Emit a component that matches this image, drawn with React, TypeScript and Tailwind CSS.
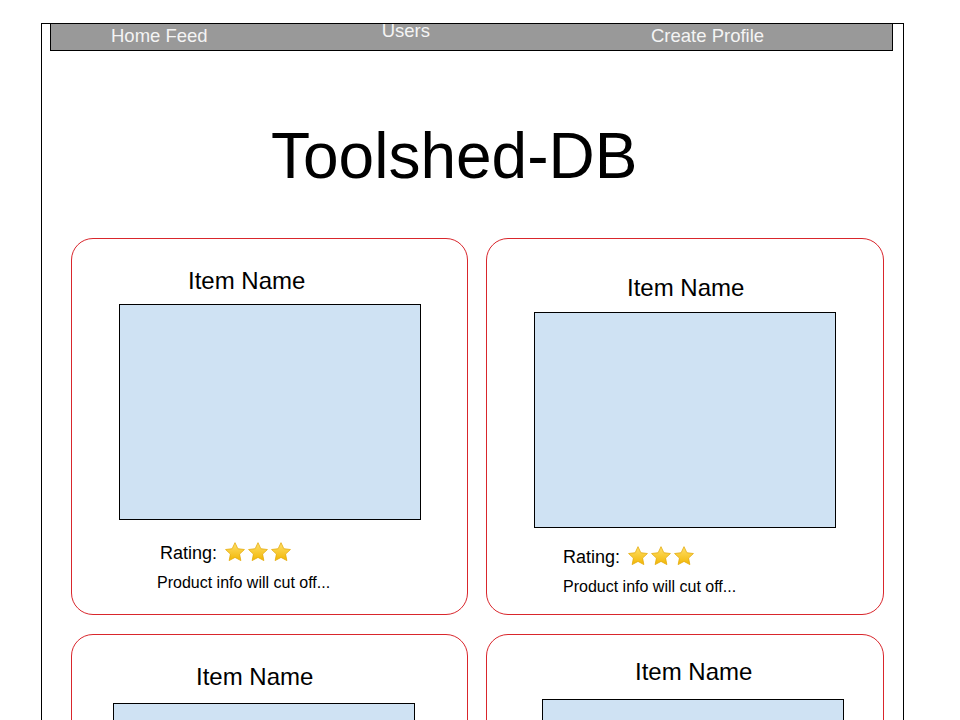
const cards = [
  { pad: 'pt-[30px]', name: 'pl-[116px]', img: 'mt-[11px] ml-[47px]', rating: 'mt-[23px] pl-[88px]', info: 'mt-[12px] pl-[85px]' },
  { pad: 'pt-[37px]', name: 'pl-[140px]', img: 'mt-[12px] ml-[47px]', rating: 'mt-[19px] pl-[76px]', info: 'mt-[12px] pl-[76px]' },
  { pad: 'pt-[30px]', name: 'pl-[124px]', img: 'mt-[14px] ml-[41px]', rating: 'mt-[19px] pl-[88px]', info: 'mt-[12px] pl-[85px]' },
  { pad: 'pt-[25px]', name: 'pl-[148px]', img: 'mt-[15px] ml-[55px]', rating: 'mt-[19px] pl-[76px]', info: 'mt-[12px] pl-[76px]' },
]

function Star() {
  return (
    <svg viewBox="0 0 24 24" className="w-[22px] h-[22px]">
      <defs>
        <linearGradient id="starFill" x1="0" y1="0" x2="0" y2="1">
          <stop offset="0%" stopColor="#ffe06a" />
          <stop offset="100%" stopColor="#f2b705" />
        </linearGradient>
      </defs>
      <path
        d="M12 1.8l3.1 6.6 7.2.9-5.3 5 1.4 7.1L12 17.9l-6.4 3.5 1.4-7.1-5.3-5 7.2-.9z"
        fill="url(#starFill)"
        stroke="#e2a600"
        strokeWidth="0.8"
        strokeLinejoin="round"
      />
    </svg>
  )
}

function ItemCard({ c }: { c: (typeof cards)[number] }) {
  return (
    <div className={`h-[377px] rounded-[22px] border border-[#d9262c] ${c.pad}`}>
      <div className={`text-[24px] leading-none text-black ${c.name}`}>Item Name</div>
      <div className={`w-[302px] h-[216px] border border-black bg-[#cfe2f3] ${c.img}`} />
      <div className={`flex items-center ${c.rating}`}>
        <span className="text-[18px] leading-none text-black">Rating:</span>
        <span className="ml-[7px] flex gap-px -mt-[2px]">
          <Star />
          <Star />
          <Star />
        </span>
      </div>
      <div className={`text-[16px] leading-none text-black ${c.info}`}>Product info will cut off...</div>
    </div>
  )
}

export default function App() {
  return (
    <div className="min-h-[720px] bg-white pt-[23px] font-['Liberation_Sans',Arial,sans-serif]">
      <div className="ml-[41px] w-[863px] border-x border-t border-black pb-10">
        <nav className="-mt-px ml-[8px] w-[843px] h-[28px] border border-black bg-[#999999] flex items-start pl-[60px] pt-[3px] text-[18.5px] leading-none text-[#f4f4f4]">
          <span>Home Feed</span>
          <span className="ml-[174px] -mt-[5px]">Users</span>
          <span className="ml-[221px]">Create Profile</span>
        </nav>
        <h1 className="mt-[73px] pl-[229px] text-[64px] leading-none text-black">Toolshed-DB</h1>
        <div className="mt-[50px] ml-[29px] grid grid-cols-[397px_398px] gap-x-[18px] gap-y-[19px]">
          {cards.map((c, i) => (
            <ItemCard key={i} c={c} />
          ))}
        </div>
      </div>
    </div>
  )
}
